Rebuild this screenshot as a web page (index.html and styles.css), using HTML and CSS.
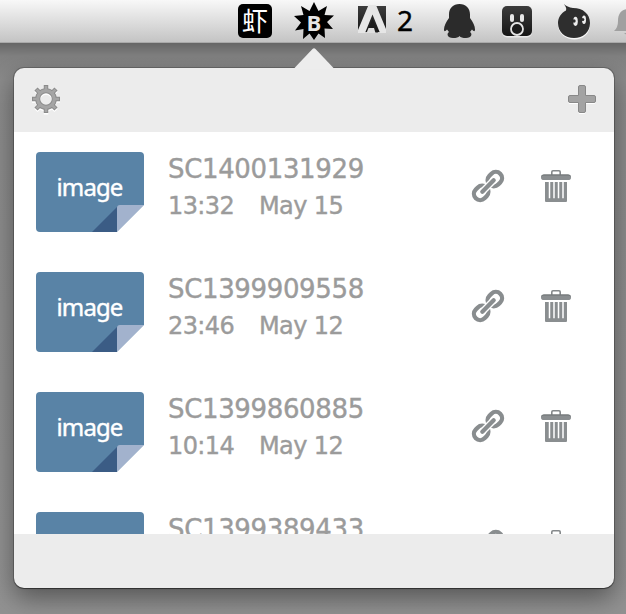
FILE: index.html
```html
<!DOCTYPE html>
<html lang="en">
<head>
<meta charset="utf-8">
<title>Uploads</title>
<link rel="stylesheet" href="styles.css">
</head>
<body>
<svg class="defs" width="0" height="0" aria-hidden="true">
  <defs>
    <linearGradient id="dark" x1="0" y1="0" x2="0" y2="1"><stop offset="0" stop-color="#3c3c3c"/><stop offset="1" stop-color="#161616"/></linearGradient>
    <symbol id="fold" viewBox="0 0 52 27"><path d="M0 27 25 2V27Z" fill="#3b5c85"/><path d="M25 27V3Q25 0 28 0H52Z" fill="#a2b2cd"/><path d="M25 27 52 0V27Z" fill="#fff"/></symbol>
    <symbol id="link" viewBox="0 0 34 34">
      <g transform="rotate(-45 17 17)" fill="none" stroke="#898d8f">
        <rect x="-.3" y="10.800" width="15.300" height="12.400" rx="6.200" stroke-width="4.300"/>
        <rect x="19" y="10.800" width="15.300" height="12.400" rx="6.200" stroke-width="4.300"/>
        <path d="M9 17H25" stroke="#fff" stroke-width="7" stroke-linecap="round"/>
        <path d="M9 17H25" stroke-width="4.300" stroke-linecap="round"/>
      </g>
    </symbol>
    <symbol id="trash" viewBox="0 0 30 33">
      <path d="M10.8 5V1.9Q10.8.8 12 .8h6q1.2 0 1.2 1.1V5" fill="none" stroke="#85898b" stroke-width="1.6"/>
      <path d="M3 4.5H27Q30 4.5 30 7.4 30 10 27 10H3Q0 10 0 7.4 0 4.5 3 4.5Z" fill="#8a8e90"/>
      <path d="M0 7Q.2 4.5 3 4.5H27Q29.8 4.5 30 7 29 5.6 27 5.6H3Q1 5.6 0 7Z" fill="#6f7375"/>
      <path d="M4 12H26V31Q26 32 25 32H5Q4 32 4 31Z" fill="#8a8e90"/>
      <path d="M8.500 12V28.300M13 12V28.300M17.500 12V28.300M22 12V28.300" stroke="#fff" stroke-width="1.500"/>
    </symbol>
  </defs>
</svg>

<header class="menubar">
  <span class="xia">虾</span>
  <svg class="burst" width="40" height="38" viewBox="0 0 40 38"><path d="M20 0 24.500 9 33 4 30.500 13 40 13.500 33 20 39 27 30.500 26.500 31 36 24.500 31.500 20 38 15.500 31.500 9 37 9.500 27 1 28.500 7 20.500 0 14 9.500 13 7 4 15.500 9Z" fill="#000"/><text x="20" y="29" text-anchor="middle" class="burst-letter">B</text></svg>
  <svg class="adobe" width="30" height="30" viewBox="0 0 30 30"><path d="M1 1H29V27H1Z" fill="url(#dark)"/><path d="M11.500 0H19L29 24V28H23L15.500 9.500 8 28H1V25Z" fill="#e6e6e6"/><path d="M15.500 14 21 27.500H18L16.500 23H12Z" fill="#1c1c1c"/><path d="M11.500 23H17L18.500 28H9.500Z" fill="#dedede"/></svg>
  <span class="count">2</span>
  <svg class="penguin" width="31" height="35" viewBox="0 0 31 35"><path d="M15.500 0C9 0 5 4.500 5 10.500V14C2 18 0 22 0 25.500 0 27.500 1 28 3 25.500L5 28C2.500 29.500 3 34 9 34Q14 34 15.500 32 17 34 22 34C28 34 28.500 29.500 26 28L28 25.500C30 28 31 27.500 31 25.500 31 22 29 18 26 14V10.500C26 4.500 22 0 15.500 0Z" fill="#2b2b2b"/></svg>
  <svg class="face" width="30" height="32" viewBox="0 0 30 32"><rect y="1" width="30" height="30.500" rx="5" fill="#e9e9e9"/><rect width="30" height="30" rx="5" fill="url(#dark)"/><rect x="8" y="8" width="4" height="8" rx="2" fill="#e8e8e8"/><rect x="18" y="8" width="4" height="8" rx="2" fill="#e8e8e8"/><circle cx="15" cy="23" r="6" fill="#1c1c1c" stroke="#e5e5e5" stroke-width="1.800"/></svg>
  <svg class="drop" width="32" height="36" viewBox="0 0 32 36"><path d="M0 20.500C0 40 32 41 32 20.500Z" fill="#f7f7f7"/><path d="M6 0Q9 3 15 4C25 4 32 10 32 19 32 28 25 34 16 34 7 34 0 28 0 19 0 14 3 9 8 6.500 9 4 7 2 6 0Z" fill="#2e2e2e"/><ellipse cx="17.500" cy="17.300" rx="2.300" ry="4.600" fill="#eee"/><ellipse cx="26" cy="15.800" rx="2" ry="4.200" fill="#eee"/><circle cx="16" cy="17" r="1.700" fill="#2e2e2e"/><circle cx="24.800" cy="15.500" r="1.500" fill="#2e2e2e"/></svg>
  <svg class="bell" width="32" height="28" viewBox="0 0 32 28"><path d="M0 22Q4 19 4 12C4 4 8 0 14 0V22Z" fill="#a0a0a0"/><path d="M10 24H20L15 28Z" fill="#a0a0a0"/></svg>
</header>

<main class="popover">
  <svg class="arrow" width="40" height="21" viewBox="0 0 40 21"><path d="M0 20.500 18.500 1Q20-.500 21.500 1L40 20.500Z" fill="#ededed"/></svg>
  <div class="toolbar">
    <svg width="28" height="30" viewBox="-14 -14 28 30">
      <defs><g id="gear"><circle r="8.300" fill="none" stroke-width="5"/><path d="M0-9V-14M0 9V14M-9 0H-14M9 0H14M-6.500-6.500-10-10M6.500-6.500 10-10M-6.500 6.500-10 10M6.500 6.500 10 10" stroke-width="4.500"/></g></defs>
      <use href="#gear" y="1.500" stroke="#fff"/><use href="#gear" stroke="#8b8b8b"/><circle r="8.300" fill="none" stroke="#a5a5a5" stroke-width="3.200"/><path d="M0-8V-13M0 8V13M-8 0H-13M8 0H13M-6.500-6.500-9.400-9.400M6.500-6.500 9.400-9.400M-6.500 6.500-9.400 9.400M6.500 6.500 9.400 9.400" stroke="#a5a5a5" stroke-width="2.600"/>
    </svg>
    <svg width="28" height="30" viewBox="0 0 28 30"><path d="M12 .500H16Q17.500.500 17.500 2V10.500H26Q27.500 10.500 27.500 12V16Q27.500 17.500 26 17.500H17.500V26Q17.500 27.500 16 27.500H12Q10.500 27.500 10.500 26V17.500H2Q.500 17.500.500 16V12Q.500 10.500 2 10.500H10.500V2Q10.500.500 12 .500Z" fill="#fff" transform="translate(0 1.500)"/><path d="M12 .500H16Q17.500.500 17.500 2V10.500H26Q27.500 10.500 27.500 12V16Q27.500 17.500 26 17.500H17.500V26Q17.500 27.500 16 27.500H12Q10.500 27.500 10.500 26V17.500H2Q.500 17.500.500 16V12Q.500 10.500 2 10.500H10.500V2Q10.500.500 12 .500Z" fill="#a3a3a3" stroke="#888"/></svg>
  </div>
  <ul class="list">
    <li class="item">
      <div class="thumb">image<svg class="fold"><use href="#fold"/></svg></div>
      <div class="info"><div class="name">SC1400131929</div><div class="meta"><span class="time">13:32</span><span>May 15</span></div></div>
      <svg class="link"><use href="#link"/></svg><svg class="trash"><use href="#trash"/></svg>
    </li>
    <li class="item">
      <div class="thumb">image<svg class="fold"><use href="#fold"/></svg></div>
      <div class="info"><div class="name">SC1399909558</div><div class="meta"><span class="time">23:46</span><span>May 12</span></div></div>
      <svg class="link"><use href="#link"/></svg><svg class="trash"><use href="#trash"/></svg>
    </li>
    <li class="item">
      <div class="thumb">image<svg class="fold"><use href="#fold"/></svg></div>
      <div class="info"><div class="name">SC1399860885</div><div class="meta"><span class="time">10:14</span><span>May 12</span></div></div>
      <svg class="link"><use href="#link"/></svg><svg class="trash"><use href="#trash"/></svg>
    </li>
    <li class="item">
      <div class="thumb"></div>
      <div class="info"><div class="name">SC1399389433</div></div>
      <svg class="link"><use href="#link"/></svg><svg class="trash"><use href="#trash"/></svg>
    </li>
  </ul>
</main>
</body>
</html>
```
FILE: styles.css
```css
* { box-sizing: border-box; }
body {
  margin: 0;
  height: 614px;
  overflow: hidden;
  background: linear-gradient(#666 43px, #808080 56px, #8b8b8b 80px, #929292);
  font-family: "DejaVu Sans", sans-serif;
}
.defs { position: absolute; }
svg { display: block; flex: none; }

.menubar {
  display: flex;
  align-items: flex-start;
  height: 43px;
  padding-left: 238px;
  overflow: hidden;
  background: linear-gradient(#f8f8f8, #c4c4c4);
  border-bottom: 1px solid #aaa;
}
.xia {
  flex: none;
  width: 34px;
  height: 34px;
  margin: 4px 22px 0 0;
  border-radius: 5px;
  background: #000;
  color: #fff;
  font: 26px/32px "Noto Sans CJK SC", sans-serif;
  text-align: center;
}
.burst { margin: 2px 23px 0 0; }
.burst-letter {
  font: bold 22px "Open Sans", sans-serif;
  fill: #e6e6e6;
}
.adobe { margin: 5px 10px 0 0; }
.count {
  flex: none;
  width: 47px;
  font: 28px/40px "Noto Sans", sans-serif;
  color: #000;
  -webkit-text-stroke: .4px #000;
}
.penguin { margin: 4px 27px 0 0; }
.face { margin: 6px 26px 0 0; }
.drop { margin: 4px 24px 0 0; }
.bell { margin-top: 9px; }

.popover {
  position: relative;
  width: 600px;
  height: 520px;
  margin: 25px 0 0 14px;
  border-radius: 10px;
  background: #ececec;
  box-shadow: 0 0 0 1px rgba(0, 0, 0, .2), 0 1px 1px rgba(0, 0, 0, .4), 0 10px 26px rgba(0, 0, 0, .42);
}
.arrow {
  position: absolute;
  left: 280px;
  top: -20px;
}
.toolbar {
  display: flex;
  justify-content: space-between;
  height: 64px;
  padding: 17px 18px 0;
}
.list {
  height: 402px;
  margin: 0;
  padding: 20px 43px 0 22px;
  overflow: hidden;
  background: #fff;
  list-style: none;
}
.item {
  display: flex;
  align-items: flex-start;
  height: 120px;
}
.thumb {
  position: relative;
  flex: none;
  width: 108px;
  height: 80px;
  border-radius: 4px;
  background: #5983a6;
  color: #fff;
  font: 24px/69px "Noto Sans", sans-serif;
  letter-spacing: -.9px;
  text-align: center;
  text-indent: -1px;
  -webkit-text-stroke: .4px #fff;
}
.fold {
  position: absolute;
  right: 0;
  bottom: 0;
  width: 52px;
  height: 27px;
}
.info {
  flex: 1;
  margin-left: 24px;
  color: #9b9b9b;
  white-space: nowrap;
  -webkit-text-stroke: .4px #9b9b9b;
}
.name {
  font-size: 26px;
  line-height: 34px;
  letter-spacing: -.35px;
}
.meta {
  display: flex;
  padding-top: 1px;
  font-size: 24px;
  line-height: 38px;
  letter-spacing: -.6px;
}
.time { width: 91px; }
.link {
  width: 34px;
  height: 34px;
  margin: 17px 36px 0 0;
  overflow: visible;
}
.trash {
  width: 30px;
  height: 33px;
  margin-top: 18px;
}
```
